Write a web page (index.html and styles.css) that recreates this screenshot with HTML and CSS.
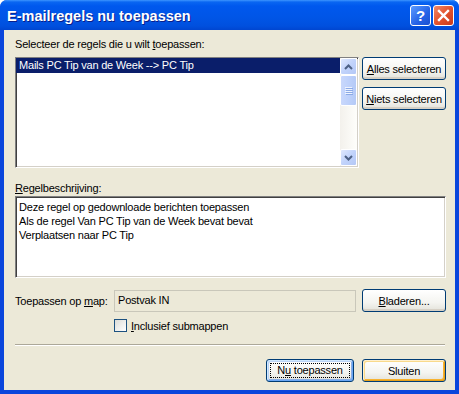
FILE: index.html
```html
<!DOCTYPE html>
<html lang="nl">
<head>
    <meta charset="UTF-8">
    <title>E-mailregels nu toepassen</title>
    <link rel="stylesheet" href="styles.css">
</head>
<body>

<div class="window">
    <!-- Titelbalk -->
    <div class="titlebar">
        <span class="title">E-mailregels nu toepassen</span>
        <div class="tbtns">
            <span class="tb tb-help">?</span>
            <span class="tb tb-close">
                <svg width="13" height="13" viewBox="0 0 13 13"><path d="M2 2 L11 11 M11 2 L2 11" stroke="#fff" stroke-width="2.4" stroke-linecap="square"/></svg>
            </span>
        </div>
    </div>

    <div class="content">
        <div class="lbl">Selecteer de regels die u wilt <u>t</u>oepassen:</div>
        <div class="rules-row">
            <div class="listbox">
                <div class="items">
                    <div class="item sel">Mails PC Tip van de Week --&gt; PC Tip</div>
                </div>
                <div class="vscroll">
                    <div class="sbtn">
                        <svg width="9" height="6" viewBox="0 0 9 6"><path d="M1 5 L4.5 1.5 L8 5" fill="none" stroke="#4d6185" stroke-width="2"/></svg>
                    </div>
                    <div class="thumb"><span></span><span></span><span></span><span></span></div>
                    <div class="track"></div>
                    <div class="sbtn">
                        <svg width="9" height="6" viewBox="0 0 9 6"><path d="M1 1 L4.5 4.5 L8 1" fill="none" stroke="#4d6185" stroke-width="2"/></svg>
                    </div>
                </div>
            </div>
            <div class="side-btns">
                <button class="btn"><u>A</u>lles selecteren</button>
                <button class="btn"><u>N</u>iets selecteren</button>
            </div>
        </div>

        <div class="lbl lbl-desc"><u>R</u>egelbeschrijving:</div>
        <div class="desc">
            <div>Deze regel op gedownloade berichten toepassen</div>
            <div>Als de regel Van PC Tip van de Week bevat bevat</div>
            <div>Verplaatsen naar PC Tip</div>
        </div>

        <div class="folder-row">
            <span class="folder-lbl">Toepassen op <u>m</u>ap:</span>
            <div class="field">Postvak IN</div>
            <button class="btn"><u>B</u>laderen...</button>
        </div>
        <div class="check-row">
            <span class="check"></span>
            <span><u>I</u>nclusief submappen</span>
        </div>

        <div class="sep"></div>

        <div class="footer">
            <button class="btn btn-default"><span class="focus">N<u>u</u> toepassen</span></button>
            <button class="btn btn-hot">Sluiten</button>
        </div>
    </div>
</div>

</body>
</html>
```

FILE: styles.css
```css
body {
    margin: 0;
    background: #fff;
    font-family: "Liberation Sans", Arial, sans-serif;
    font-size: 11px;
    letter-spacing: -0.2px;
    color: #000;
}
.window {
    width: 459px;
    height: 394px;
    box-sizing: border-box;
    background: #0a46dc;
    border-radius: 7px 7px 0 0;
    display: flex;
    flex-direction: column;
    padding: 0 4px 4px 4px;
}
.titlebar {
    height: 30px;
    margin: 0 -4px;
    border-radius: 7px 7px 0 0;
    background: linear-gradient(#3d95ff 0, #0a66f2 2px, #0058ee 6px, #0055e6 18px, #0050de 26px, #0046d0 30px);
    display: flex;
    align-items: center;
    justify-content: space-between;
    padding: 0 5px 0 7px;
}
.title {
    color: #fff;
    font-weight: bold;
    font-size: 14.5px;
    letter-spacing: 0;
    text-shadow: 1px 1px #0a1e8a;
    padding-top: 1px;
}
.tbtns { display: flex; gap: 2px; }
.tb {
    width: 21px;
    height: 21px;
    box-sizing: border-box;
    border: 1px solid #fff;
    border-radius: 3px;
    display: flex;
    align-items: center;
    justify-content: center;
    color: #fff;
    font-weight: bold;
    font-size: 15px;
}
.tb-help { background: linear-gradient(135deg, #5b9bff, #2462e6 60%, #1b4fd0); }
.tb-close { background: linear-gradient(135deg, #f08a6a, #e3532d 50%, #c8391b); }

.content {
    flex: 1;
    background: #ece9d8;
    padding: 8px 9px 0 11px;
    display: flex;
    flex-direction: column;
}
.lbl { line-height: 13px; height: 13px; }
.rules-row {
    display: flex;
    gap: 3px;
    margin-top: 6px;
}
.listbox, .desc {
    background: #fff;
    border: 1px solid;
    border-color: #808080 #fff #fff #808080;
    box-shadow: inset 1px 1px #404040, inset -1px -1px #d4d0c8;
}
.listbox {
    width: 344px;
    height: 111px;
    box-sizing: border-box;
    display: flex;
    padding: 0 1px 1px 0;
}
.items { flex: 1; }
.item {
    height: 15px;
    line-height: 15px;
    padding-left: 3px;
}
.item.sel { background: #0a1e6a; color: #fff; }
.vscroll {
    width: 17px;
    display: flex;
    flex-direction: column;
    background: linear-gradient(90deg, #f3f1ec, #fefefb);
}
.sbtn {
    height: 17px;
    box-sizing: border-box;
    border: 1px solid #fff;
    border-radius: 2px;
    background: linear-gradient(135deg, #dfe8fd, #c1d3fb 50%, #b4c8f6);
    display: flex;
    align-items: center;
    justify-content: center;
}
.thumb {
    height: 31px;
    box-sizing: border-box;
    border: 1px solid #fff;
    border-radius: 2px;
    background: linear-gradient(90deg, #c9d8fc, #bed1fb 50%, #b5caf6);
    display: flex;
    flex-direction: column;
    align-items: center;
    justify-content: center;
    gap: 1px;
}
.thumb span { width: 7px; height: 1px; background: #eef3fe; box-shadow: 1px 1px #8caae6; }
.track { flex: 1; }

.side-btns {
    display: flex;
    flex-direction: column;
    gap: 7px;
}
.btn {
    width: 84px;
    height: 23px;
    box-sizing: border-box;
    border: 1px solid #003c74;
    border-radius: 3px;
    background: linear-gradient(#fff, #f4f4f0 60%, #e3e2da);
    box-shadow: inset 0 -2px #d6d0c5;
    font-family: inherit;
    font-size: 11px;
    letter-spacing: -0.2px;
    color: #000;
    padding: 0;
}
.lbl-desc { margin-top: 14px; }
.desc {
    margin-top: 1px;
    height: 82px;
    box-sizing: border-box;
    padding: 3px 3px;
    line-height: 14px;
}
.folder-row {
    display: flex;
    align-items: center;
    margin-top: 11px;
}
.folder-lbl { width: 99px; }
.field {
    width: 242px;
    height: 22px;
    box-sizing: border-box;
    border: 1px solid #c9c7ba;
    background: #ece9d8;
    padding: 3px 3px;
    margin-right: 6px;
}
.check-row {
    display: flex;
    align-items: center;
    gap: 4px;
    margin: 7px 0 0 99px;
}
.check {
    width: 13px;
    height: 13px;
    box-sizing: border-box;
    border: 1px solid #1c5180;
    background: linear-gradient(135deg, #dcdcd7, #fff);
}
.sep {
    margin: 12px 1px 0 0;
    height: 1px;
    background: #aca899;
    border-bottom: 1px solid #fff;
}
.footer {
    display: flex;
    justify-content: flex-end;
    gap: 8px;
    margin-top: 13px;
}
.btn-default {
    width: 88px;
    box-shadow: inset 1px 1px #cee7ff, inset -1px -1px #69a6f5, inset 2px 2px #bcd4f6, inset -2px -2px #89ade4;
    padding: 3px;
}
.focus {
    display: block;
    height: 100%;
    box-sizing: border-box;
    border: 1px dotted #000;
    line-height: 13px;
}
.btn-hot {
    box-shadow: inset 1px 1px #fff0cf, inset -1px -1px #e5a01a, inset 2px 2px #f9da8b, inset -2px -2px #f8b330;
}
```
